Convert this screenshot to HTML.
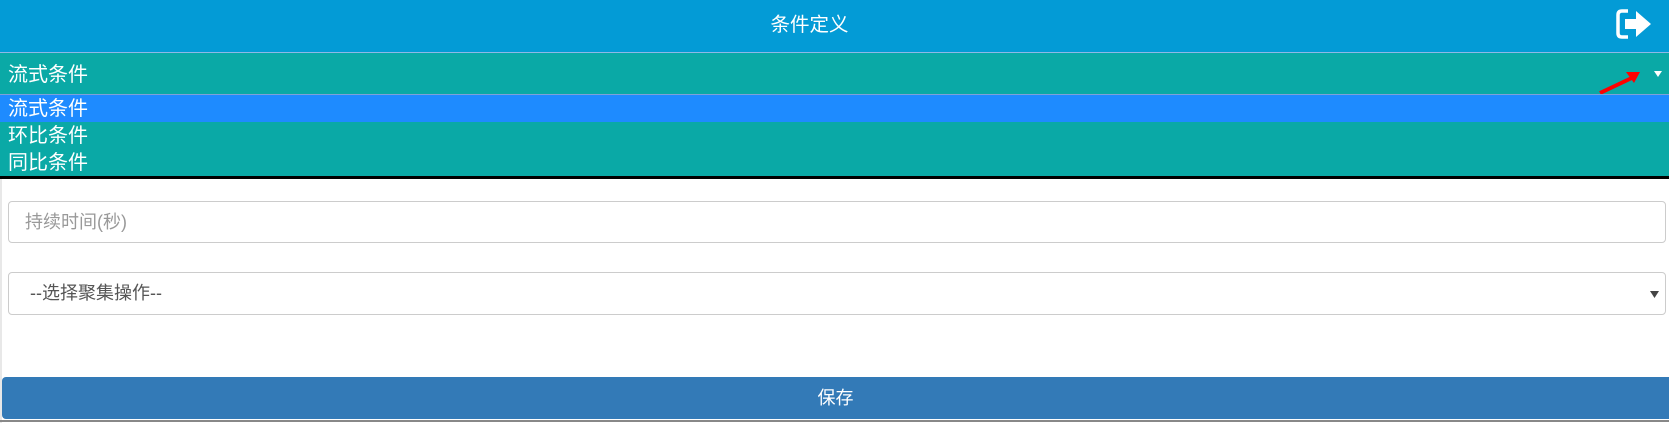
<!DOCTYPE html>
<html><head><meta charset="utf-8"><style>
*{box-sizing:border-box;margin:0;padding:0}
body{width:1669px;height:423px;overflow:hidden;background:#fff;font-family:"Liberation Sans","Noto Sans CJK SC",sans-serif;position:relative}
.hdr{position:absolute;left:0;top:0;width:1669px;height:52px;background:#039bd6;color:#fff;font-size:19.5px;text-align:center;line-height:50px;padding-right:50px}
.line{position:absolute;left:0;top:52px;width:1669px;height:1px;background:#8fb8e6}
.sel{position:absolute;left:0;top:53px;width:1669px;height:41px;background:#0aa9a6;color:#fff;font-size:20px;line-height:44px;padding-left:8px}
.l2{position:absolute;left:0;top:94px;width:1669px;height:1px;background:#7fa0d8}
.opts{position:absolute;left:0;top:95px;width:1669px;height:82px;background:#0aa9a6;color:#fff;font-size:20px}
.opts div{height:27px;line-height:28px;padding-left:8px}
.opts .a{background:#1e8bff}
.blk{position:absolute;left:0;top:176px;width:1669px;height:3px;background:#000}
.lb{position:absolute;left:0;top:179px;width:2px;height:244px;background:#e8e8e8}
.inp{position:absolute;left:8px;top:201px;width:1658px;height:42px;border:1px solid #ccc;border-radius:4px;font-size:18px;color:#999;line-height:40px;padding-left:16px}
.s2{position:absolute;left:8px;top:272px;width:1658px;height:43px;border:1px solid #ccc;border-radius:4px;font-size:18px;color:#555;line-height:41px;padding-left:21px}
.btn{position:absolute;left:2px;top:377px;width:1667px;height:42px;background:#337ab7;border-radius:4px 0 0 4px;color:#fff;font-size:18px;text-align:center;line-height:42px}
.bl{position:absolute;left:0;top:420px;width:1669px;height:2px;background:#888}
</style></head><body>
<div class="hdr">条件定义</div>
<svg style="position:absolute;left:1615px;top:8px" width="38" height="32" viewBox="0 0 38 32">
<path d="M13 3H7Q3 3 3 7V25Q3 29 7 29H13" fill="none" stroke="#fff" stroke-width="3.5"/>
<path d="M10 11H21V3L36 16L21 29V21H10Z" fill="#fff"/>
</svg>
<div class="line"></div>
<div class="sel">流式条件</div>
<svg style="position:absolute;left:1596px;top:66px" width="50" height="30"><path d="M4 27L40 10" stroke="#f00" stroke-width="4"/><path d="M30 6L44 6L38 17Z" fill="#f00"/></svg>
<svg style="position:absolute;left:1654px;top:70px" width="8" height="8"><path d="M0 1H8L4 7Z" fill="#fff"/></svg>
<div class="l2"></div>
<div class="opts"><div class="a">流式条件</div><div>环比条件</div><div>同比条件</div></div>
<div class="blk"></div>
<div class="lb"></div>
<div class="inp">持续时间(秒)</div>
<div class="s2">--选择聚集操作--</div>
<svg style="position:absolute;left:1650px;top:290px" width="9" height="8"><path d="M0 1H9L4.5 8Z" fill="#444"/></svg>
<div class="btn">保存</div>
<div class="bl"></div>
</body></html>
